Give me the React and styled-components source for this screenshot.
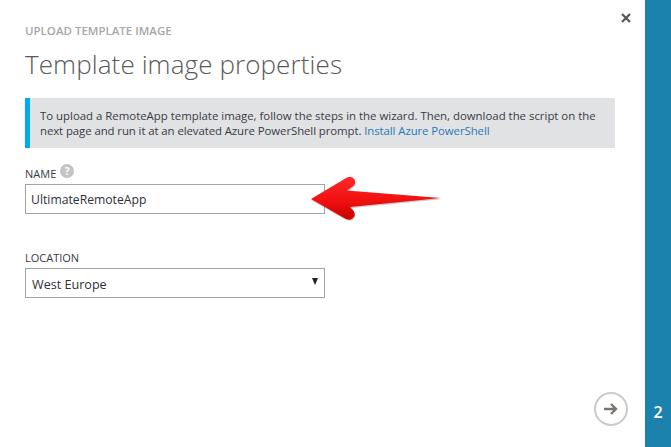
import React from 'react';
import styled, { createGlobalStyle } from 'styled-components';

const GlobalStyle = createGlobalStyle`
    html, body {
        margin: 0;
        padding: 0;
        background: #fff;
    }
    body {
        font-family: "Open Sans", "Liberation Sans", sans-serif;
    }
`;

const Wizard = styled.div`
    position: relative;
    display: flex;
    width: 671px;
    height: 447px;
    overflow: hidden;
    background: #fff;
`;

const Main = styled.main`
    position: relative;
    flex: 1;
    display: flex;
    flex-direction: column;
    padding: 24px 30px 0 25px;
`;

const StepBar = styled.aside`
    width: 26px;
    display: flex;
    align-items: flex-end;
    justify-content: center;
    padding-bottom: 25px;
    box-sizing: border-box;
    background: #1b82ae;
    color: #fff;
    font-size: 16px;
    font-weight: 600;
    line-height: 19px;
`;

const CloseButton = styled.button`
    position: absolute;
    top: 12px;
    right: 13px;
    width: 12px;
    height: 12px;
    padding: 0;
    border: 0;
    background: none;
    display: flex;
`;

const Eyebrow = styled.div`
    font-size: 11.5px;
    font-weight: 600;
    line-height: 14px;
    color: #a7a7a7;
`;

const Title = styled.h1`
    margin: 9px 0 0;
    font-size: 26px;
    font-weight: 300;
    line-height: 34px;
    letter-spacing: 0.1px;
    color: #5a5a5a;
`;

const Notice = styled.div`
    margin-top: 17px;
    height: 50px;
    box-sizing: border-box;
    padding: 10px 10px 0 10px;
    border-left: 5px solid #00abec;
    background: #e1e2e4;
    font-size: 11.4px;
    line-height: 15px;
    color: #3a3a44;
`;

const NoticeLine = styled.div`
    letter-spacing: ${p => p.$tracking}px;
    white-space: nowrap;
`;

const Link = styled.a`
    color: #2b78b4;
`;

const Label = styled.label`
    display: flex;
    align-items: center;
    gap: 4px;
    margin-top: ${p => p.$top}px;
    height: 16px;
    font-size: 11px;
    color: #3a3a44;
`;

const HelpIcon = styled.span`
    width: 14px;
    height: 14px;
    margin-top: -4px;
    border-radius: 50%;
    background: #c4c4c4;
    color: #fff;
    font-size: 10px;
    font-weight: 700;
    line-height: 14px;
    text-align: center;
`;

const Field = styled.div`
    margin-top: 3px;
    width: 300px;
    height: 30px;
    box-sizing: border-box;
    display: flex;
    align-items: center;
    justify-content: space-between;
    padding: ${p => p.$nudge}px 6px 0 ${p => p.$inset}px;
    border: 1px solid #a3a3a3;
    background: #fff;
    font-size: ${p => p.$size}px;
    color: #2f2f38;
`;

const Caret = styled.span`
    width: 0;
    height: 0;
    margin-top: -6px;
    border-left: 3.5px solid transparent;
    border-right: 3.5px solid transparent;
    border-top: 7px solid #222;
`;

const NextButton = styled.button`
    position: absolute;
    right: 17px;
    bottom: 21px;
    width: 34px;
    height: 34px;
    padding: 0;
    box-sizing: border-box;
    border: 2px solid #cbcbcb;
    border-radius: 50%;
    background: #fff;
    display: flex;
    align-items: center;
    justify-content: center;
`;

const ArrowOverlay = styled.svg`
    position: absolute;
    left: 300px;
    top: 170px;
`;

const RedArrow = () => (
    <ArrowOverlay width="150" height="60" viewBox="300 170 150 60">
        <defs>
            <linearGradient id="arrowFill" x1="0" y1="0" x2="0" y2="1">
                <stop offset="0" stopColor="#ff2a2a" />
                <stop offset="0.55" stopColor="#f01010" />
                <stop offset="1" stopColor="#c80000" />
            </linearGradient>
        </defs>
        <path
            d="M311 199 L347 177.5 Q352 175.5 354.5 179.5 Q356.5 184 352 187 L347 190.5 L441 198 L350 207 L353 210 Q356.5 214.5 353 218 Q350 221 345 218.5 Z"
            fill="#8a8a8a"
            opacity="0.45"
            transform="translate(0.5 1.2)"
        />
        <path
            d="M311 199 L347 177.5 Q352 175.5 354.5 179.5 Q356.5 184 352 187 L347 190.5 L441 198 L350 207 L353 210 Q356.5 214.5 353 218 Q350 221 345 218.5 Z"
            fill="url(#arrowFill)"
        />
    </ArrowOverlay>
);

const App = () => (
    <Wizard>
        <GlobalStyle />
        <Main>
            <CloseButton aria-label="Close">
                <svg width="12" height="12" viewBox="0 0 12 12">
                    <path d="M2 2 L10 10 M10 2 L2 10" stroke="#555" strokeWidth="2.2" />
                </svg>
            </CloseButton>
            <Eyebrow>UPLOAD TEMPLATE IMAGE</Eyebrow>
            <Title>Template image properties</Title>
            <Notice>
                <NoticeLine $tracking={0}>
                    To upload a RemoteApp template image, follow the steps in the wizard. Then, download the script on the
                </NoticeLine>
                <NoticeLine $tracking={-0.08}>
                    next page and run it at an elevated Azure PowerShell prompt. <Link>Install Azure PowerShell</Link>
                </NoticeLine>
            </Notice>
            <Label $top={17}>
                NAME <HelpIcon>?</HelpIcon>
            </Label>
            <Field $inset={5} $size={12.2} $nudge={0}>UltimateRemoteApp</Field>
            <Label $top={35}>LOCATION</Label>
            <Field $inset={6} $size={12.6} $nudge={2}>
                West Europe
                <Caret />
            </Field>
            <NextButton aria-label="Next">
                <svg width="18" height="16" viewBox="0 0 18 16">
                    <path d="M2 8 H14 M9 3 L14 8 L9 13" fill="none" stroke="#7b7570" strokeWidth="2.4" />
                </svg>
            </NextButton>
        </Main>
        <StepBar>2</StepBar>
        <RedArrow />
    </Wizard>
);

export default App;
